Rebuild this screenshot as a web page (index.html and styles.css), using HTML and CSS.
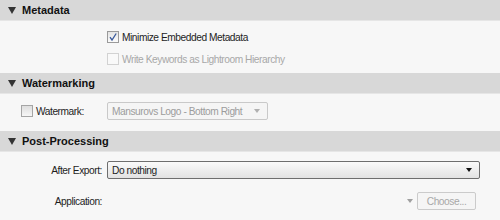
FILE: index.html
```html
<!DOCTYPE html>
<html>
<head>
<meta charset="utf-8">
<link rel="stylesheet" href="styles.css">
</head>
<body>
<div class="panel">
  <div class="hdr"><span class="tri"></span><span class="title">Metadata</span></div>
  <div class="body meta">
    <div class="row">
      <div class="lbl"></div>
      <label class="chk"><span class="box checked"><svg width="10" height="10" viewBox="0 0 10 10"><path d="M2 5.2 L4 8 L8.2 1.5" fill="none" stroke="#3a5a9c" stroke-width="1.3"/></svg></span><span>Minimize Embedded Metadata</span></label>
    </div>
    <div class="row">
      <div class="lbl"></div>
      <label class="chk dis"><span class="box"></span><span>Write Keywords as Lightroom Hierarchy</span></label>
    </div>
  </div>

  <div class="hdr"><span class="tri"></span><span class="title">Watermarking</span></div>
  <div class="body wm">
    <div class="row">
      <label class="chk wmchk"><span class="box"></span><span>Watermark:</span></label>
      <div class="select dis wmsel"><span>Mansurovs Logo - Bottom Right</span><span class="arr"></span></div>
    </div>
  </div>

  <div class="hdr"><span class="tri"></span><span class="title">Post-Processing</span></div>
  <div class="body post">
    <div class="row">
      <div class="lbl">After Export:</div>
      <div class="select full"><span>Do nothing</span><span class="arr"></span></div>
    </div>
    <div class="row">
      <div class="lbl">Application:</div>
      <div class="appctl"><span class="arr small"></span><span class="btn">Choose...</span></div>
    </div>
  </div>
</div>
</body>
</html>
```

FILE: styles.css
```css
html, body {
  margin: 0;
  padding: 0;
  background: #f7f7f7;
}
body {
  width: 500px;
  height: 220px;
  overflow: hidden;
  font-family: "Liberation Sans", Arial, sans-serif;
  font-size: 10.2px;
  letter-spacing: -0.45px;
  color: #1e1e1e;
  white-space: nowrap;
}
.panel {
  display: flex;
  flex-direction: column;
}
.hdr {
  height: 21px;
  background: #d8d8d8;
  display: flex;
  align-items: center;
  box-sizing: border-box;
  border-bottom: 1px solid #e6e6e6;
}
.tri {
  width: 0;
  height: 0;
  margin-left: 8px;
  margin-right: 6px;
  border-left: 4px solid transparent;
  border-right: 4px solid transparent;
  border-top: 7px solid #333;
}
.title {
  font-weight: bold;
  font-size: 11px;
  letter-spacing: 0;
  color: #111;
}
.body {
  display: flex;
  flex-direction: column;
}
.meta { height: 52px; padding-top: 5px; box-sizing: border-box; }
.wm { height: 37px; padding-top: 6px; box-sizing: border-box; }
.post { height: 68px; padding-top: 7px; box-sizing: border-box; gap: 9px; }
.row {
  display: flex;
  align-items: center;
  height: 22px;
}
.lbl {
  width: 103px;
  flex: none;
  text-align: right;
  padding-right: 1px;
  box-sizing: border-box;
}
.chk {
  display: flex;
  align-items: center;
  gap: 3px;
}
.lbl + .chk { margin-left: 4px; }
.chk.dis { color: #a8a8a8; }
.box {
  width: 12px;
  height: 12px;
  box-sizing: border-box;
  border: 1px solid #9a9a9a;
  background: linear-gradient(#e4e4e4, #fbfbfb);
  display: flex;
  align-items: center;
  justify-content: center;
}
.dis .box {
  border-color: #d2d2d2;
  background: #f9f9f9;
}
.wmchk {
  width: 107px;
  flex: none;
  padding-left: 21px;
  box-sizing: border-box;
}
.wmchk .box { border-color: #a5a5a5; background: linear-gradient(#dedede, #f6f6f6); }
.select {
  height: 18px;
  box-sizing: border-box;
  border: 1px solid #6e6e6e;
  border-radius: 2px;
  background: linear-gradient(#fafafa, #e2e2e2);
  display: flex;
  align-items: center;
  justify-content: space-between;
  padding: 0 7px 0 4px;
}
.lbl + .select { margin-left: 4px; }
.select.dis {
  border-color: #c9c9c9;
  background: #f5f5f5;
  color: #9c9c9c;
}
.wmsel { width: 161px; }
.full { width: 373px; }
.arr {
  width: 0;
  height: 0;
  border-left: 3.5px solid transparent;
  border-right: 3.5px solid transparent;
  border-top: 4px solid #111;
}
.dis .arr { border-top-color: #b0b0b0; }
.arr.small { border-top-color: #a0a0a0; }
.appctl {
  flex: 1;
  display: flex;
  align-items: center;
  justify-content: flex-end;
  gap: 4px;
  padding-right: 24px;
}
.btn {
  width: 59px;
  height: 18px;
  box-sizing: border-box;
  border: 1px solid #cbcbcb;
  border-radius: 2px;
  background: #f5f5f5;
  color: #a8a8a8;
  display: flex;
  align-items: center;
  justify-content: center;
}
```
